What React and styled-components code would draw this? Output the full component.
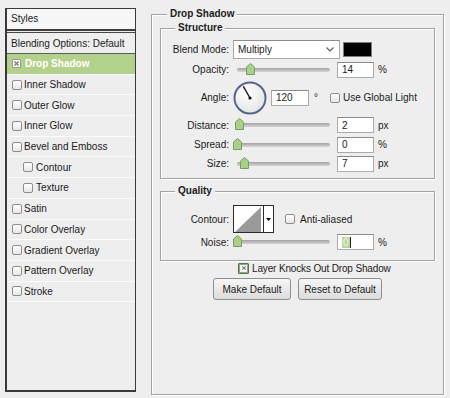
import React from "react";
import styled, { createGlobalStyle } from "styled-components";

const GlobalStyle = createGlobalStyle`
  html, body {
    margin: 0;
    padding: 0;
    background: #eeeeee;
  }
  body {
    font-family: "Liberation Sans", Arial, sans-serif;
    font-size: 10px;
    color: #1b1b1b;
  }
  * {
    box-sizing: border-box;
  }
`;

const styleItems = [
  { name: "Drop Shadow", checked: true, selected: true },
  { name: "Inner Shadow" },
  { name: "Outer Glow" },
  { name: "Inner Glow" },
  { name: "Bevel and Emboss" },
  { name: "Contour", indent: true },
  { name: "Texture", indent: true },
  { name: "Satin" },
  { name: "Color Overlay" },
  { name: "Gradient Overlay" },
  { name: "Pattern Overlay" },
  { name: "Stroke" },
];

const structureSliders = [
  { label: "Distance:", value: "2", unit: "px", pos: 2 },
  { label: "Spread:", value: "0", unit: "%", pos: 0 },
  { label: "Size:", value: "7", unit: "px", pos: 7.5 },
];

const CrossMark = ({ size = 7 }) => (
  <svg width={size} height={size} viewBox="0 0 7 7">
    <path d="M1.5 1.5 L5.5 5.5 M5.5 1.5 L1.5 5.5" stroke="#7c7c7c" strokeWidth="1.2" />
  </svg>
);

const Slider = ({ pos }) => (
  <SliderBox>
    <Track>
      <Thumb style={{ left: `calc(${pos}% - 4px)` }}>
        <svg width="9" height="12" viewBox="0 0 9 12">
          <polygon
            points="4.5,0.5 8.5,4 8.5,11.5 0.5,11.5 0.5,4"
            fill="#a9cf8a"
            stroke="#76a05a"
          />
        </svg>
      </Thumb>
    </Track>
  </SliderBox>
);

const AngleDial = () => (
  <svg width="34" height="34" viewBox="0 0 34 34">
    <defs>
      <radialGradient id="dialFill" cx="40%" cy="35%" r="70%">
        <stop offset="0%" stopColor="#ffffff" />
        <stop offset="100%" stopColor="#e3e3e3" />
      </radialGradient>
    </defs>
    <circle cx="17" cy="17" r="15.5" fill="url(#dialFill)" stroke="#56658f" strokeWidth="2" />
    <line x1="17" y1="17" x2="10.3" y2="5.4" stroke="#111" strokeWidth="1.3" />
    <circle cx="17" cy="17" r="1.6" fill="#111" />
  </svg>
);

export default function App() {
  return (
    <Window>
      <GlobalStyle />
      <StylesPanel>
        <PanelHeader>Styles</PanelHeader>
        <StyleList>
          <BlendRow>Blending Options: Default</BlendRow>
          {styleItems.map((item) => (
            <StyleRow key={item.name} $selected={item.selected} $indent={item.indent}>
              {item.checked ? (
                <SmallBox>
                  <CrossMark />
                </SmallBox>
              ) : (
                <Box />
              )}
              {item.name}
            </StyleRow>
          ))}
        </StyleList>
      </StylesPanel>

      <Group $outer>
        <Legend $offset={7}>Drop Shadow</Legend>

        <Group>
          <Legend $offset={14}>Structure</Legend>
          <FormRow $h={19}>
            <Label>Blend Mode:</Label>
            <Select>
              Multiply
              <svg width="8" height="5" viewBox="0 0 8 5">
                <path d="M0.5 0.5 L4 4 L7.5 0.5" fill="none" stroke="#555" strokeWidth="1.1" />
              </svg>
            </Select>
            <Swatch />
          </FormRow>
          <FormRow $h={21}>
            <Label>Opacity:</Label>
            <Slider pos={14} />
            <Field>14</Field>
            <Unit>%</Unit>
          </FormRow>
          <FormRow $h={35}>
            <Label>Angle:</Label>
            <AngleDial />
            <Field $w={38} $ml={4}>120</Field>
            <Unit $ml={5}>°</Unit>
            <CheckLabel $ml={12} $gap={3}>
              <Box />
              Use Global Light
            </CheckLabel>
          </FormRow>
          {structureSliders.map((s, i) => (
            <FormRow key={s.label} $h={i === 0 ? 20 : 19}>
              <Label>{s.label}</Label>
              <Slider pos={s.pos} />
              <Field>{s.value}</Field>
              <Unit>{s.unit}</Unit>
            </FormRow>
          ))}
        </Group>

        <Group $quality>
          <Legend $offset={14}>Quality</Legend>
          <FormRow $h={28}>
            <Label>Contour:</Label>
            <ContourPicker>
              <svg width="29" height="26" viewBox="0 0 29 26">
                <rect width="29" height="26" fill="#ffffff" />
                <polygon points="1,26 27,1 27,26" fill="#9a9a9a" />
              </svg>
              <ContourArrow>
                <svg width="5" height="3" viewBox="0 0 5 3">
                  <polygon points="0,0 5,0 2.5,3" fill="#111" />
                </svg>
              </ContourArrow>
            </ContourPicker>
            <CheckLabel $ml={11} $gap={5}>
              <Box />
              Anti-aliased
            </CheckLabel>
          </FormRow>
          <FormRow $h={18}>
            <Label>Noise:</Label>
            <Slider pos={0} />
            <Field>
              <Selected>0</Selected>
            </Field>
            <Unit>%</Unit>
          </FormRow>
        </Group>

        <KnockRow>
          <GreenBox>
            <SmallBox>
              <CrossMark size={6} />
            </SmallBox>
          </GreenBox>
          Layer Knocks Out Drop Shadow
        </KnockRow>

        <ButtonRow>
          <Button $w={78}>Make Default</Button>
          <Button $w={84}>Reset to Default</Button>
        </ButtonRow>
      </Group>
    </Window>
  );
}

const Window = styled.div`
  display: flex;
  align-items: flex-start;
  gap: 15px;
  width: 450px;
  height: 398px;
  padding: 8px 0 0 5px;
  overflow: hidden;
`;

const StylesPanel = styled.div`
  display: flex;
  flex-direction: column;
  width: 131px;
  height: 384px;
  flex-shrink: 0;
  background: #eeeeee;
  border: 1px solid #3a3a3a;
  border-left-width: 2px;
  border-bottom-width: 2px;
`;

const PanelHeader = styled.div`
  height: 22px;
  line-height: 20px;
  padding-left: 4px;
  background: #f7f7f7;
  border-bottom: 2px solid #3e3e3e;
`;

const StyleList = styled.div`
  margin-top: 1px;
  border-top: 1px solid #474747;
`;

const BlendRow = styled.div`
  display: flex;
  align-items: center;
  height: 21px;
  padding-left: 4px;
  border-bottom: 1px solid #5c5c5c;
`;

const StyleRow = styled.div`
  display: flex;
  align-items: center;
  height: 20.7px;
  padding-left: ${(p) => (p.$indent ? 16 : 5)}px;
  border-bottom: 1px solid #fbfbfb;
  background: ${(p) => (p.$selected ? "#b4d18c" : "transparent")};
  color: ${(p) => (p.$selected ? "#ffffff" : "inherit")};
  font-weight: ${(p) => (p.$selected ? "bold" : "normal")};
  gap: ${(p) => (p.$selected ? 4 : p.$indent ? 3 : 2)}px;
`;

const Box = styled.span`
  display: inline-block;
  width: 10px;
  height: 10px;
  flex-shrink: 0;
  border: 1px solid #8d8d8d;
  border-radius: 2px;
  background: linear-gradient(#ffffff, #e7e7e7);
`;

const SmallBox = styled.span`
  display: inline-flex;
  align-items: center;
  justify-content: center;
  width: 9px;
  height: 9px;
  flex-shrink: 0;
  border: 1px solid #9a9a9a;
  border-radius: 1px;
  background: #f4f4f4;
`;

const GreenBox = styled.span`
  display: inline-flex;
  align-items: center;
  justify-content: center;
  width: 11px;
  height: 11px;
  border: 1px solid #4f7a3a;
  border-radius: 1px;
  background: #9ccc7c;
`;

const Group = styled.fieldset`
  margin: ${(p) => (p.$quality ? "6px 0 0" : "0")};
  width: ${(p) => (p.$outer ? "293px" : "auto")};
  height: ${(p) => (p.$outer ? "387px" : "auto")};
  flex-shrink: 0;
  padding: ${(p) => (p.$outer ? "2px 8px 0" : p.$quality ? "8px 0 9px" : "6px 0 5px")};
  border: 1px solid #a4a4a4;
  box-shadow: inset 1px 1px 0 #ffffff, 1px 1px 0 #ffffff;
  min-width: 0;
`;

const Legend = styled.legend`
  margin-left: ${(p) => p.$offset}px;
  padding: 0 3px;
  line-height: 12px;
  font-weight: bold;
  background: #eeeeee;
`;

const FormRow = styled.div`
  display: flex;
  align-items: center;
  height: ${(p) => p.$h}px;
`;

const Label = styled.span`
  width: 68px;
  margin-right: 4px;
  flex-shrink: 0;
  text-align: right;
`;

const Select = styled.div`
  display: flex;
  align-items: center;
  justify-content: space-between;
  width: 107px;
  height: 19px;
  padding: 0 5px 0 4px;
  background: #ffffff;
  border: 1px solid #a9a9a9;
  border-top-color: #8c8c8c;
`;

const Swatch = styled.div`
  width: 29px;
  height: 15px;
  margin-left: 3px;
  background: #000000;
  border: 1px solid #7d7d7d;
`;

const SliderBox = styled.div`
  display: flex;
  align-items: center;
  width: 100px;
  height: 12px;
  margin-right: 4px;
  padding: 0 3px 0 4px;
`;

const Track = styled.div`
  position: relative;
  flex: 1;
  height: 4px;
  border-radius: 2px;
  background: linear-gradient(#a2a2a2, #d6d6d6);
`;

const Thumb = styled.div`
  position: absolute;
  top: -5px;
  width: 9px;
  height: 12px;
  line-height: 0;
`;

const Field = styled.div`
  display: flex;
  align-items: center;
  width: ${(p) => p.$w || 37}px;
  height: 16px;
  margin-left: ${(p) => p.$ml || 0}px;
  padding-left: 4px;
  background: #ffffff;
  border: 1px solid #aaaaaa;
  border-top-color: #8a8a8a;
`;

const Selected = styled.span`
  padding: 0 1px;
  background: #b9d59b;
  color: #f4f8ef;
  border-right: 1px solid #222;
`;

const Unit = styled.span`
  margin-left: ${(p) => p.$ml || 4}px;
`;

const CheckLabel = styled.label`
  display: flex;
  align-items: center;
  gap: ${(p) => p.$gap}px;
  margin-left: ${(p) => p.$ml}px;
`;

const ContourPicker = styled.div`
  display: flex;
  width: 41px;
  height: 28px;
  border: 1px solid #2a2a2a;
  background: #ffffff;
`;

const ContourArrow = styled.div`
  display: flex;
  align-items: center;
  justify-content: center;
  flex: 1;
  border-left: 1px solid #2a2a2a;
  background: #ffffff;
`;

const KnockRow = styled.div`
  display: flex;
  align-items: center;
  gap: 3px;
  height: 14px;
  padding-left: 78px;
  letter-spacing: -0.15px;
`;

const ButtonRow = styled.div`
  display: flex;
  justify-content: center;
  gap: 7px;
  margin-top: 3px;
`;

const Button = styled.button`
  width: ${(p) => p.$w}px;
  height: 22px;
  padding: 0;
  font: inherit;
  color: #1b1b1b;
  background: linear-gradient(#f6f6f6, #dcdcdc);
  border: 1px solid #8f8f8f;
  border-radius: 3px;
`;
